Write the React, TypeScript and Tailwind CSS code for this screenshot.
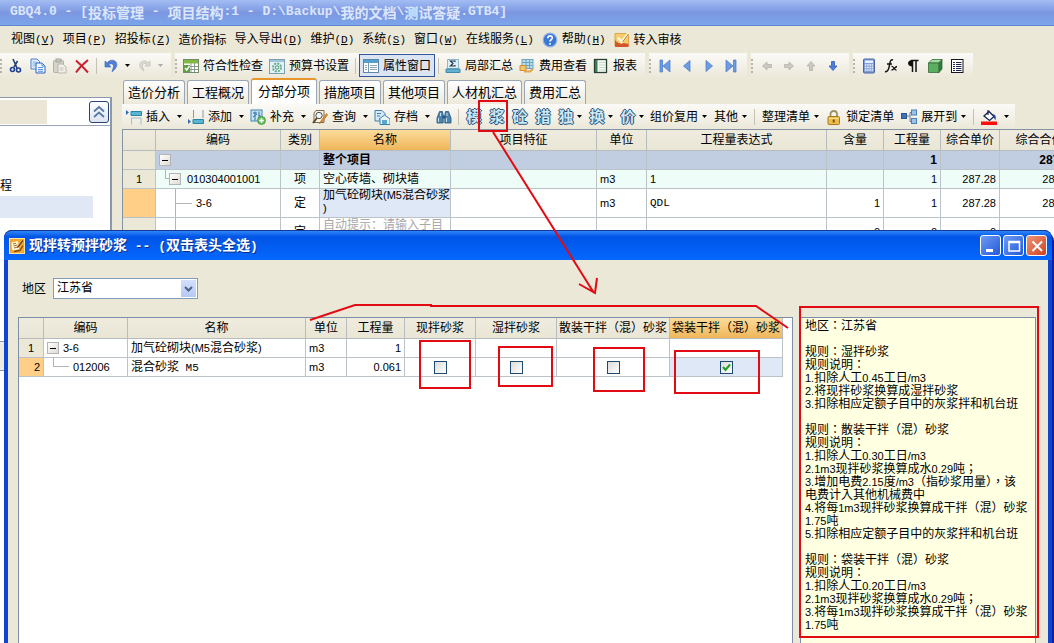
import { useState } from 'react';
import type { ReactNode } from 'react';

/* ---------- icons ---------- */

const Ico = ({ children, size = 'size-4' }: { children: ReactNode; size?: string }) => (
  <svg viewBox="0 0 16 16" className={`${size} shrink-0`} fill="none" aria-hidden="true">
    {children}
  </svg>
);

const CutIcon = () => (
  <Ico>
    <path d="M5 1l4 9M9.500 3L6 9" stroke="#27406e" strokeWidth="1.600" />
    <circle cx="4.500" cy="11.500" r="2" stroke="#1c3f94" strokeWidth="1.600" />
    <circle cx="10.500" cy="12" r="2" stroke="#1c3f94" strokeWidth="1.600" />
  </Ico>
);
const CopyIcon = () => (
  <Ico>
    <path d="M1 1h6l2.500 2.500V11H1z" fill="#e4f0ff" stroke="#4a7fd0" />
    <path d="M2.500 4h4M2.500 6h4M2.500 8h3" stroke="#7fb0ea" />
    <path d="M6 5h6l3 3v7H6z" fill="#f2f8ff" stroke="#2f62bd" />
    <path d="M12 5v3h3M8 9.500h5M8 11.500h5M8 13.300h5" stroke="#5b93dd" />
  </Ico>
);
const PasteIcon = () => (
  <Ico>
    <rect x="1.500" y="2.500" width="10" height="12" rx="1" fill="#d6d3c9" stroke="#b3b0a6" />
    <rect x="4" y="1" width="5" height="3" fill="#c6c3ba" stroke="#aaa79e" />
    <path d="M6 6h5l3 3v6H6z" fill="#f0efea" stroke="#b8b5ab" />
    <path d="M7.500 10h4M7.500 12h4" stroke="#c4c1b8" />
  </Ico>
);
const DeleteIcon = () => (
  <Ico>
    <path d="M2 2.500c4 3.500 8 7.500 12 12M14 2C9 6 5 10 2 14.500" stroke="#cb1f2d" strokeWidth="2" />
  </Ico>
);
const UndoIcon = () => (
  <Ico>
    <path d="M2 3v6h6L5.800 6.700C8.500 4.800 11 5.800 10.300 9.500L9 13.800c5-3.500 6-8 3.500-10.300C10 1.300 6.500 2 4 4.800z" fill="#4f7fd6" stroke="#3465bd" strokeWidth=".6" />
  </Ico>
);
const RedoIcon = () => (
  <Ico>
    <path d="M14 3v5H9l2-2C8.500 4.500 5.500 6 6.500 9l1.500 4C3.500 10.500 2.500 6.500 5 4.200 7.500 2 10.500 3 12.200 4.800z" fill="#dcdad4" stroke="#bebbb2" strokeWidth=".7" />
  </Ico>
);
const CheckTableIcon = () => (
  <Ico>
    <rect x=".5" y="1.500" width="15" height="13" fill="#fff" stroke="#708b6b" />
    <path d="M1 2h14v3.500H1z" fill="#83b93f" />
    <path d="M1 8.500h14M1 11.500h14M8 5v9M11.500 5v9" stroke="#8b9a91" />
    <path d="M1 7h6v7H1z" fill="#5fa03c" />
    <path d="M2 10l1.700 2L6.500 8" stroke="#fff" strokeWidth="1.400" />
  </Ico>
);
const BudgetIcon = () => (
  <Ico>
    <rect x=".5" y="1.500" width="15" height="14" fill="#e4f2f8" stroke="#7ba0b2" />
    <path d="M1 2h14v2H1z" fill="#9cc6d8" />
    <circle cx="8" cy="9.500" r="4" stroke="#62ac86" strokeWidth="2" strokeDasharray="2 1.100" />
    <circle cx="8" cy="9.500" r="1.700" stroke="#459470" />
  </Ico>
);
const PropsIcon = () => (
  <Ico>
    <rect x=".5" y="1.500" width="15" height="13" fill="#fff" stroke="#5f86a8" />
    <path d="M1 2h14v3H1z" fill="#50a3c8" />
    <path d="M5.500 5v9" stroke="#7999ae" />
    <path d="M2 7.500h2M2 9.500h2M2 11.500h2M7 7.500h7M7 9.500h7M7 11.500h7" stroke="#8aa5b5" />
  </Ico>
);
const SumIcon = () => (
  <Ico>
    <path d="M2.500 1.500h11v9h-11z" fill="#dceef7" stroke="#90b6cc" />
    <path d="M10 4V3H5.500L8 5.500 5.500 8H10V7" stroke="#27364a" strokeWidth="1.200" />
    <path d="M1 11h14v3.500H1z" fill="#62b2cf" stroke="#3f89aa" />
  </Ico>
);
const FeeIcon = () => (
  <Ico>
    <rect x="3" y="1.500" width="11" height="9" fill="#b9dcea" stroke="#6ca6c0" />
    <path d="M3 4.500h11M3 7.500h11M7 2v8M10.500 2v8" stroke="#6ca6c0" />
    <path d="M1 7.500h6v5H1z" fill="#f2c36b" stroke="#cf9038" />
    <path d="M5 13.500h6l3-2.500" stroke="#e0a24a" strokeWidth="2" />
  </Ico>
);
const ReportIcon = () => (
  <Ico>
    <rect x="1.500" y="1.500" width="12" height="13" fill="#f6fbf4" stroke="#283f33" strokeWidth="1.300" />
    <path d="M2 2h2.500v12H2z" fill="#3a7b57" />
    <path d="M6 4.500h6M6 7h6M6 9.500h6M6 12h6" stroke="#c5d8c6" />
  </Ico>
);
const NavIcon = ({ kind }: { kind: 'first' | 'prev' | 'next' | 'last' }) => (
  <Ico>
    {kind === 'first' && <path d="M3 2h2.500v12H3zM13 2v12L6 8z" fill="#6d9be4" stroke="#4576cb" strokeWidth=".7" />}
    {kind === 'prev' && <path d="M11 2.500v11L4.500 8z" fill="#6d9be4" stroke="#4576cb" strokeWidth=".7" />}
    {kind === 'next' && <path d="M5 2.500v11L11.500 8z" fill="#6d9be4" stroke="#4576cb" strokeWidth=".7" />}
    {kind === 'last' && <path d="M10.500 2H13v12h-2.500zM3 2v12l7-6z" fill="#6d9be4" stroke="#4576cb" strokeWidth=".7" />}
  </Ico>
);
const arrowTurn = { right: 'rotate(0 8 8)', down: 'rotate(90 8 8)', left: 'rotate(180 8 8)', up: 'rotate(270 8 8)' };
const ArrowIcon = ({ dir, on }: { dir: keyof typeof arrowTurn; on?: boolean }) => (
  <Ico>
    <path
      d="M3.500 6.500h4.500V4l4.500 4L8 12V9.500H3.500z"
      transform={arrowTurn[dir]}
      fill={on ? '#4d7edb' : '#cbc9c2'}
      stroke={on ? '#2f5cb5' : '#b4b2aa'}
      strokeWidth=".8"
    />
  </Ico>
);
const CalcIcon = () => (
  <Ico>
    <rect x="2.500" y="1" width="11" height="14" rx="1" fill="#7f9cd6" stroke="#4c66a5" />
    <path d="M4 2.500h8v2.500H4z" fill="#e7f1ff" />
    <path d="M4 7h8M4 9.500h8M4 12h8" stroke="#eef3ff" strokeWidth="1.500" strokeDasharray="1.500 .7" />
  </Ico>
);
const FxIcon = () => (
  <Ico>
    <path d="M10 2C7.500 1 7 4 6.500 7S5 14.500 2 13.500M4 6h5" stroke="#111" strokeWidth="1.500" />
    <path d="M8.500 8.500c2.500-.5 2.500 4 5 3.500M14 8.500c-2 .2-3.300 3.500-5.500 3.500" stroke="#111" strokeWidth="1.300" />
  </Ico>
);
const ParaIcon = () => (
  <Ico>
    <path d="M7.500 3v11M11 3v11M6 2.600h7.500" stroke="#111" strokeWidth="1.500" />
    <path d="M7.500 2C1.500 2 1.500 8.500 7.500 8.500z" fill="#111" />
  </Ico>
);
const CubeIcon = () => (
  <Ico>
    <path d="M1.500 5L5 1.500h10L12 5z" fill="#a4dca0" stroke="#35693b" strokeWidth=".8" />
    <path d="M1.500 5H12v9.500H1.500z" fill="#5bae60" stroke="#35693b" strokeWidth=".8" />
    <path d="M12 5l3-3.500V11l-3 3.500z" fill="#2f7a3c" stroke="#35693b" strokeWidth=".8" />
  </Ico>
);
const ListIcon = () => (
  <Ico>
    <rect x="2.500" y="1.500" width="11.500" height="13" fill="#fff" stroke="#16161f" />
    <path d="M4 4.500h2M4 6.500h2M4 8.500h2M4 10.500h2M4 12.500h2M7 4.500h5.500M7 6.500h5.500M7 8.500h5.500M7 10.500h5.500M7 12.500h5.500" stroke="#22264f" />
  </Ico>
);
const HelpIcon = () => (
  <Ico>
    <circle cx="8" cy="8" r="6.800" fill="#3b76d2" stroke="#8fb2e6" strokeWidth="1.200" />
    <path d="M5.700 6.200C5.700 3 10.600 3.200 10.300 6 10.100 7.500 8 7.700 8 9.600M8 11v1.700" stroke="#fff" strokeWidth="1.700" />
  </Ico>
);
const AuditIcon = () => (
  <Ico>
    <path d="M1 1.500h13.500v12.500H1z" fill="#f6cd6c" stroke="#e0a548" />
    <path d="M1 8c2 3 5 4 9 3l4.500 1v3H1z" fill="#d5542c" />
    <path d="M4 5.500l3.500 4.500L14.500 1" stroke="#fff6d8" strokeWidth="2.600" />
    <path d="M8.500 10l6-8" stroke="#b67b29" />
  </Ico>
);
const InsertIcon = () => (
  <Ico>
    <path d="M0 1l3 2.500L0 6z" fill="#2c6fb3" />
    <path d="M5 2.500h10.500v4H5z" fill="#56b6d3" stroke="#2b84a8" />
    <path d="M5.500 9v6.500M15 9v6.500M5.500 9H15" stroke="#a4bccb" />
  </Ico>
);
const AddIcon = () => (
  <Ico>
    <path d="M0 10l3 2.500L0 15z" fill="#2c6fb3" />
    <path d="M5 10.500h10.500v4H5z" fill="#56b6d3" stroke="#2b84a8" />
    <path d="M5.500 1v8M15 1v8" stroke="#7e9db3" />
  </Ico>
);
const SupplyIcon = () => (
  <Ico>
    <rect x="1" y="1" width="11" height="11" fill="#c8e4f3" stroke="#3d87b2" />
    <path d="M3 4h4M5 2.500v9M3 8l4-3M9 2.500v8M9 6l2 1.500" stroke="#2c72a4" />
    <circle cx="11.500" cy="11.500" r="4" fill="#6bbd5a" stroke="#3f8c3b" strokeWidth=".7" />
    <path d="M11.500 9.200v4.600M9.200 11.500h4.600" stroke="#fff" strokeWidth="1.500" />
  </Ico>
);
const QueryIcon = () => (
  <Ico>
    <path d="M4 1.500h8v12H2V4z" fill="#fbf4df" stroke="#7a6b55" />
    <circle cx="7" cy="6.500" r="3.200" fill="#eef4fa" stroke="#4b4b4b" />
    <path d="M5 9l-4 5" stroke="#5c4630" strokeWidth="2" />
    <path d="M14.500 4.500L9 12l-1.500 2.500L10 13l5.500-7z" fill="#f09a2e" stroke="#a85f17" strokeWidth=".7" />
  </Ico>
);
const ArchiveIcon = () => (
  <Ico>
    <path d="M1 1.500h7l3 3V12H1z" fill="#d5e9f6" stroke="#3d7fae" />
    <path d="M3 4.500h4M3 7h3" stroke="#3d7fae" />
    <path d="M5 10l5.500-4L16 10v5.500H6V10z" fill="#eaf5fb" stroke="#3a83ab" />
    <path d="M8 11h5v4H8z" fill="#58a9cd" />
  </Ico>
);
const BinocularsIcon = () => (
  <Ico>
    <path d="M3.500 2.500h3l.7 4v7.500H1V9zM12.500 2.500h-3l-.7 4v7.500H15V9z" fill="#4c83ad" stroke="#24587f" strokeWidth=".8" />
    <path d="M6.500 6.500h3v3h-3z" fill="#24587f" />
    <path d="M2.500 9v4M10.500 9v4M4.500 4v3M11 4v3" stroke="#c6e0f0" />
  </Ico>
);
const LockIcon = () => (
  <Ico>
    <path d="M4.500 8V5c0-4 6.500-4 6.500 0v3" stroke="#9d9168" strokeWidth="1.800" />
    <rect x="2" y="7.500" width="11.500" height="8" rx="1" fill="#eebc4c" stroke="#a97a1f" />
    <path d="M3 9.500h9.500" stroke="#fbe29b" />
    <path d="M7.700 10.500v3" stroke="#6e4b0c" strokeWidth="1.800" />
  </Ico>
);
const ExpandIcon = () => (
  <Ico>
    <path d="M6 7h3V3.500h2M9 7v5.500h2" stroke="#6d7f9c" />
    <rect x=".5" y="4.500" width="5" height="5" fill="#3f72b8" stroke="#2c5690" />
    <rect x="10.500" y="1" width="5" height="5" fill="#9dc4e8" stroke="#487fb7" />
    <rect x="10.500" y="9.500" width="5" height="5" fill="#9dc4e8" stroke="#487fb7" />
  </Ico>
);
const FillIcon = () => (
  <Ico>
    <path d="M3 7l5-4.500 5 5-4.500 4z" fill="#fff" stroke="#15254f" strokeWidth="1.300" />
    <path d="M7 1v5" stroke="#15254f" strokeWidth="1.200" />
    <path d="M12 5c3 1 3 3 2.500 6-1.500-1-2-3-2.500-6z" fill="#1d47a5" />
    <path d="M0 12.500h16V16H0z" fill="#f90d0d" />
  </Ico>
);
const AppIcon = () => (
  <Ico>
    <rect x=".5" y=".5" width="15" height="15" fill="#f4a72c" stroke="#ffe5a0" />
    <path d="M2.500 4.500L9 3l1 8-5 1.500-2-1z" fill="#fff7dd" />
    <path d="M4 6l3-.7M4.500 8l4-1M5 10l4-1" stroke="#a05a14" strokeWidth=".9" />
    <path d="M8.500 9.500l5.500-7M5 13.500l6-1 3-5" stroke="#7b4310" strokeWidth="1.300" />
  </Ico>
);

/* ---------- small parts ---------- */

// Latin runs are set in their own face and size beside the Chinese text
const Mixed = ({ text, latin = 'text-[11px]' }: { text: string; latin?: string }) => (
  <>
    {text.split(/([\x20-\x7e]+)/).map((part, i) =>
      i % 2 ? <span key={i} className={`whitespace-pre ${latin}`}>{part}</span> : part
    )}
  </>
);

const MenuLabel = ({ text, hotkey }: { text: string; hotkey?: string }) => (
  <span>
    {text}
    {hotkey && (
      <span className='font-["Liberation_Mono",monospace] text-[11px]'>
        (<u>{hotkey}</u>)
      </span>
    )}
  </span>
);

const Caret = ({ off }: { off?: boolean }) => (
  <svg viewBox="0 0 5 3" className="h-[3px] w-[5px] shrink-0" aria-hidden="true">
    <path d="M0 0h5L2.500 3z" fill={off ? '#aaa' : '#000'} />
  </svg>
);

const Sep = () => <span className="h-4 w-px shrink-0 bg-[#c5c2b5]" />;

const Grip = () => <span className="h-[14px] shrink-0 border-l-2 border-dotted border-[#b8b5a8]" />;

const IconButton = ({ label, children }: { label: string; children: ReactNode }) => (
  <button type="button" aria-label={label} className="flex shrink-0 items-center">
    {children}
  </button>
);

const MenuButton = ({ icon, label, caret = 'none' }: { icon?: ReactNode; label: string; caret?: 'none' | 'near' | 'far' }) => (
  <button type="button" className="flex shrink-0 items-center gap-1 whitespace-nowrap">
    {icon}
    {label}
    {caret === 'near' && <Caret />}
    {caret === 'far' && <span className="flex w-2 justify-end"><Caret /></span>}
  </button>
);

const GlyphButton = ({ glyph, caret }: { glyph: string; caret?: boolean }) => (
  <button type="button" className="flex shrink-0 items-center gap-[3px]">
    <span className="w-4 text-[15px] leading-4 font-bold text-[#cfe7f4] [text-shadow:1px_0_#1f5078,-1px_0_#1f5078,0_1px_#1f5078,0_-1px_#1f5078]">
      {glyph}
    </span>
    {caret && <Caret />}
  </button>
);

const Minus = () => (
  <span className="flex size-3 shrink-0 items-center justify-center border border-[#b4b4b4] bg-linear-to-br from-white to-[#dedbd2]">
    <span className="h-px w-1.5 bg-black" />
  </span>
);

const band = 'flex h-full items-center gap-1.5 bg-linear-to-b from-[#fbfaf7] to-[#ebe8d9] pr-2';

/* ---------- data ---------- */

const menus = [
  { text: '视图', hotkey: 'V' },
  { text: '项目', hotkey: 'P' },
  { text: '招投标', hotkey: 'Z' },
  { text: '造价指标' },
  { text: '导入导出', hotkey: 'D' },
  { text: '维护', hotkey: 'D' },
  { text: '系统', hotkey: 'S' },
  { text: '窗口', hotkey: 'W' },
  { text: '在线服务', hotkey: 'L' },
];

const tabs = ['造价分析', '工程概况', '分部分项', '措施项目', '其他项目', '人材机汇总', '费用汇总'];

const notes = [
  '地区：江苏省',
  '',
  '规则：湿拌砂浆',
  '规则说明：',
  '1.扣除人工0.45工日/m3',
  '2.将现拌砂浆换算成湿拌砂浆',
  '3.扣除相应定额子目中的灰浆拌和机台班',
  '',
  '规则：散装干拌（混）砂浆',
  '规则说明：',
  '1.扣除人工0.30工日/m3',
  '2.1m3现拌砂浆换算成水0.29吨；',
  '3.增加电费2.15度/m3（指砂浆用量），该',
  '电费计入其他机械费中',
  '4.将每1m3现拌砂浆换算成干拌（混）砂浆',
  '1.75吨',
  '5.扣除相应定额子目中的灰浆拌和机台班',
  '',
  '规则：袋装干拌（混）砂浆',
  '规则说明：',
  '1.扣除人工0.20工日/m3',
  '2.1m3现拌砂浆换算成水0.29吨；',
  '3.将每1m3现拌砂浆换算成干拌（混）砂浆',
  '1.75吨',
];

const mortarTypes = ['现拌砂浆', '湿拌砂浆', '散装干拌（混）砂浆', '袋装干拌（混）砂浆'];

const th = 'overflow-hidden border-r border-b border-[#b6bcc0] p-0 text-center font-normal whitespace-nowrap';
const td = 'overflow-hidden border-r border-b border-[#bcc3c8] px-[3px] py-0 whitespace-nowrap';
const num = 'text-right text-[11px]';
const headBg = 'bg-linear-to-b from-[#efecdf] to-[#e9e6d6]';
const hotBg = 'bg-linear-to-b from-[#fbdc9a] to-[#efb658]';
const gridTable = 'table-fixed border-separate border-spacing-0';

/* ---------- main window ---------- */

const TitleBar = () => (
  <header className="flex h-[26px] shrink-0 items-center border-b border-[#6583cf] bg-linear-to-b from-[#a3bdf3] via-[#7c97e1] to-[#7ba5ea] pl-[10px] text-sm font-bold whitespace-nowrap text-[#dce6fb]">
    <Mixed text="GBQ4.0 - [投标管理 - 项目结构:1 - D:\Backup\我的文档\测试答疑.GTB4]" latin='font-["Liberation_Mono",monospace] text-[13px]' />
  </header>
);

const MenuBar = () => (
  <nav className="flex h-[27px] shrink-0 items-center gap-2 pl-[11px] whitespace-nowrap">
    {menus.map((m) => (
      <button type="button" key={m.text}><MenuLabel {...m} /></button>
    ))}
    <button type="button" className="flex items-center gap-1">
      <HelpIcon />
      <MenuLabel text="帮助" hotkey="H" />
    </button>
    <button type="button" className="flex items-center gap-1">
      <AuditIcon />
      转入审核
    </button>
  </nav>
);

const MainToolbar = () => (
  <div className="flex h-[25px] shrink-0 gap-1">
    <div className={band}>
      <Grip />
      <IconButton label="剪切"><CutIcon /></IconButton>
      <IconButton label="复制"><CopyIcon /></IconButton>
      <IconButton label="粘贴"><PasteIcon /></IconButton>
      <IconButton label="删除"><DeleteIcon /></IconButton>
      <Sep />
      <IconButton label="撤销"><UndoIcon /></IconButton>
      <Caret />
      <IconButton label="恢复"><RedoIcon /></IconButton>
      <Caret off />
    </div>
    <div className={band}>
      <Grip />
      <MenuButton icon={<CheckTableIcon />} label="符合性检查" />
      <MenuButton icon={<BudgetIcon />} label="预算书设置" />
      <div className="flex items-center gap-[3px]">
        <Sep />
        <button type="button" className="flex h-[23px] items-center gap-1 border border-[#33539b] bg-[#dbe4f2] px-[3px] whitespace-nowrap">
          <PropsIcon />
          属性窗口
        </button>
        <Sep />
      </div>
      <MenuButton icon={<SumIcon />} label="局部汇总" />
      <MenuButton icon={<FeeIcon />} label="费用查看" />
      <MenuButton icon={<ReportIcon />} label="报表" />
    </div>
    <div className={band}>
      <Grip />
      <IconButton label="首条"><NavIcon kind="first" /></IconButton>
      <IconButton label="上一条"><NavIcon kind="prev" /></IconButton>
      <IconButton label="下一条"><NavIcon kind="next" /></IconButton>
      <IconButton label="末条"><NavIcon kind="last" /></IconButton>
    </div>
    <div className={band}>
      <Grip />
      <IconButton label="左移"><ArrowIcon dir="left" /></IconButton>
      <IconButton label="右移"><ArrowIcon dir="right" /></IconButton>
      <IconButton label="上移"><ArrowIcon dir="up" /></IconButton>
      <IconButton label="下移"><ArrowIcon dir="down" on /></IconButton>
    </div>
    <div className={band}>
      <Grip />
      <IconButton label="计算器"><CalcIcon /></IconButton>
      <IconButton label="函数"><FxIcon /></IconButton>
      <IconButton label="段落"><ParaIcon /></IconButton>
      <IconButton label="图元"><CubeIcon /></IconButton>
      <IconButton label="列表"><ListIcon /></IconButton>
    </div>
  </div>
);

const Sidebar = () => (
  <aside className="mt-[19px] w-[112px] shrink-0 border-t border-r-2 border-[#8b98ac] bg-white">
    <div className="flex h-7 items-center justify-between border-b border-[#9aa4b2] pr-px">
      <span className="h-6 w-[47px] bg-[#ebe6d6]" />
      <button type="button" aria-label="收起" className="flex h-[22px] w-5 items-center justify-center rounded-[3px] border border-[#27446f] bg-linear-to-b from-white to-[#dbe4f0]">
        <Ico>
          <path d="M3 7.500L8 3l5 4.500M3 13l5-4.500 5 4.500" stroke="#5779a6" strokeWidth="1.800" />
        </Ico>
      </button>
    </div>
    <p className="mt-[50px] h-5 leading-5">程</p>
    <div className="h-[22px] w-[93px] bg-[#dfe8f4]" />
    <div className="mt-[123px] h-[30px] border-y border-[#8b98ac] bg-[#eeecE2]" />
  </aside>
);

const EditToolbar = () => (
  <div className="flex h-[25px] shrink-0">
    <div className="flex items-center bg-linear-to-b from-[#fbfaf7] to-[#ebe8d9] pr-1.5 pl-1">
      <div className="flex items-center gap-1.5">
        <MenuButton icon={<InsertIcon />} label="插入" caret="far" />
        <MenuButton icon={<AddIcon />} label="添加" caret="far" />
        <MenuButton icon={<SupplyIcon />} label="补充" caret="far" />
        <MenuButton icon={<QueryIcon />} label="查询" caret="far" />
        <MenuButton icon={<ArchiveIcon />} label="存档" caret="far" />
        <IconButton label="查找"><BinocularsIcon /></IconButton>
      </div>
      <div className="flex items-center gap-[7px] px-1.5">
        <Sep />
        <GlyphButton glyph="模" />
        <GlyphButton glyph="浆" />
        <GlyphButton glyph="砼" />
        <GlyphButton glyph="措" />
        <GlyphButton glyph="独" caret />
        <GlyphButton glyph="换" caret />
        <GlyphButton glyph="价" caret />
      </div>
      <div className="flex items-center gap-[7px]">
        <MenuButton label="组价复用" caret="near" />
        <MenuButton label="其他" caret="near" />
        <Sep />
        <MenuButton label="整理清单" caret="near" />
        <MenuButton icon={<LockIcon />} label="锁定清单" />
        <MenuButton icon={<ExpandIcon />} label="展开到" caret="near" />
        <Sep />
        <IconButton label="填充颜色"><FillIcon /></IconButton>
        <Caret />
      </div>
    </div>
  </div>
);

const BillTable = () => (
  <div className="flex-1 overflow-hidden border-t border-l border-[#8393a3] bg-white">
    <table className={`${gridTable} w-full min-w-[957px]`}>
      <colgroup>
        <col className="w-[33px]" />
        <col className="w-[125px]" />
        <col className="w-[39px]" />
        <col className="w-[131px]" />
        <col className="w-[146px]" />
        <col className="w-[50px]" />
        <col className="w-[180px]" />
        <col className="w-[57px]" />
        <col className="w-[57px]" />
        <col className="w-[59px]" />
        <col />
      </colgroup>
      <thead>
        <tr className="h-[21px]">
          {['', '编码', '类别', '名称', '项目特征', '单位', '工程量表达式', '含量', '工程量', '综合单价', '综合合价'].map((h) => (
            <th key={h} className={`${th} ${h === '名称' ? hotBg : headBg}`}>{h}</th>
          ))}
        </tr>
      </thead>
      <tbody>
        <tr className="h-[19px] bg-[#c1cde0] font-bold">
          <td className={`${td} bg-[#ebe8d8]`} />
          <td className={td}><Minus /></td>
          <td className={td} />
          <td className={td}>整个项目</td>
          <td className={td} />
          <td className={td} />
          <td className={td} />
          <td className={td} />
          <td className={`${td} text-right`}>1</td>
          <td className={td} />
          <td className={`${td} text-right`}>287.28</td>
        </tr>
        <tr className="h-[19px] bg-[#effdf9]">
          <td className={`${td} bg-[#ebe8d8] text-center text-[11px]`}>1</td>
          <td className={td}>
            <div className="flex h-[18px] items-center pl-1.5">
              <span className="h-[9px] w-1 self-start border-b border-l border-[#b4b4b4]" />
              <Minus />
              <span className="pl-1.5 text-[11px]">010304001001</span>
            </div>
          </td>
          <td className={`${td} text-center`}>项</td>
          <td className={td}>空心砖墙、砌块墙</td>
          <td className={td} />
          <td className={`${td} text-[11px]`}>m3</td>
          <td className={`${td} text-[11px]`}>1</td>
          <td className={td} />
          <td className={`${td} ${num}`}>1</td>
          <td className={`${td} ${num}`}>287.28</td>
          <td className={`${td} ${num}`}>287.28</td>
        </tr>
        <tr className="h-[29px]">
          <td className={`${td} bg-[#ffcf87]`} />
          <td className={td}>
            <div className="flex h-7 items-center pl-4">
              <span className="h-full border-l border-[#b4b4b4]" />
              <span className="w-4 border-t border-[#b4b4b4]" />
              <span className="pl-1 text-[11px]">3-6</span>
            </div>
          </td>
          <td className={`${td} text-center`}>定</td>
          <td className={`${td} bg-[#dfe8f6]`}>
            <div className="h-7 leading-[13px]">
              <Mixed text="加气砼砌块(M5混合砂浆" />
              <br />
              <Mixed text=")" />
            </div>
          </td>
          <td className={td} />
          <td className={`${td} text-[11px]`}>m3</td>
          <td className={`${td} font-["Liberation_Mono",monospace] text-[11px]`}>QDL</td>
          <td className={`${td} ${num}`}>1</td>
          <td className={`${td} ${num}`}>1</td>
          <td className={`${td} ${num}`}>287.28</td>
          <td className={`${td} ${num}`}>287.28</td>
        </tr>
        <tr className="h-[29px]">
          <td className={`${td} bg-[#ebe8d8]`} />
          <td className={td}>
            <div className="flex h-7 pl-4">
              <span className="border-l border-[#b4b4b4]" />
            </div>
          </td>
          <td className={`${td} text-center`}>定</td>
          <td className={`${td} text-[#a9a9a9]`}>
            <div className="h-7 leading-[14px]">自动提示：请输入子目</div>
          </td>
          <td className={td} />
          <td className={td} />
          <td className={td} />
          <td className={`${td} ${num}`}>0</td>
          <td className={`${td} ${num}`}>0</td>
          <td className={`${td} ${num}`}>0</td>
          <td className={`${td} ${num}`}>0</td>
        </tr>
      </tbody>
    </table>
  </div>
);

/* ---------- mortar dialog ---------- */

const MortarDialog = () => {
  const [region, setRegion] = useState('江苏省');
  const [checked, setChecked] = useState([false, false, false, true]);

  const toggle = (index: number) => setChecked((prev) => prev.map((c, i) => (i === index ? !c : c)));

  return (
    <section
      role="dialog"
      aria-label="现拌转预拌砂浆"
      className="absolute top-[230px] right-[2px] bottom-0 left-1 flex flex-col rounded-t-lg border-x-4 border-[#0f45d0] bg-[#0f45d0] shadow-[2px_3px_0_#0b1fa6]"
    >
      <div className="-mx-1 flex h-[30px] shrink-0 items-center gap-1 rounded-t-lg border-t border-[#123a9a] bg-linear-to-b from-[#2f86fa] via-[#0054e6] via-20% to-[#0568ff] pr-[5px] pl-[5px] text-sm font-bold text-white">
        <AppIcon />
        <h2 className="flex-1 whitespace-nowrap [text-shadow:1px_1px_#0a2f8a]">
          <Mixed text="现拌转预拌砂浆 -- (双击表头全选)" latin='font-["Liberation_Mono",monospace] text-[13px]' />
        </h2>
        <div className="flex gap-0.5">
          <button type="button" aria-label="最小化" className="size-[21px] rounded-[3px] border border-white bg-linear-to-br from-[#6f9bf3] to-[#2457d8] p-0.5">
            <Ico><path d="M3 11h7v3H3z" fill="#fff" /></Ico>
          </button>
          <button type="button" aria-label="最大化" className="size-[21px] rounded-[3px] border border-white bg-linear-to-br from-[#6f9bf3] to-[#2457d8] p-0.5">
            <Ico><path d="M3 3.500h10.500V13H3zM3 4.500h10.500" stroke="#fff" strokeWidth="1.500" /></Ico>
          </button>
          <button type="button" aria-label="关闭" className="size-[21px] rounded-[3px] border border-white bg-linear-to-br from-[#ee9478] to-[#cf3d17] p-0.5">
            <Ico><path d="M3.500 3.500l9.500 9.500M13 3.500L3.500 13" stroke="#fff" strokeWidth="2" /></Ico>
          </button>
        </div>
      </div>

      <div className="flex min-h-0 flex-1 flex-col bg-[#ebe8d8] pr-3 pl-[10px]">
        <div className="flex h-[57px] shrink-0 items-center gap-[7px] pl-1">
          <label htmlFor="region">地区</label>
          <div className="relative">
            <select
              id="region"
              value={region}
              onChange={(e) => setRegion(e.target.value)}
              className="h-[21px] w-[145px] appearance-none border border-[#7f9db9] bg-white px-[3px] leading-[19px] outline-none"
            >
              <option>江苏省</option>
            </select>
            <span className="pointer-events-none absolute top-0.5 right-0.5 flex h-[17px] w-[15px] items-center justify-center bg-linear-to-b from-[#d3dffd] to-[#b5c9f6]">
              <svg viewBox="0 0 9 6" className="h-1.5 w-[9px]" fill="none">
                <path d="M1 1l3.500 3.500L8 1" stroke="#4d6185" strokeWidth="2" />
              </svg>
            </span>
          </div>
        </div>

        <div className="flex min-h-0 flex-1 gap-[7px]">
          <div className="min-w-0 flex-1 overflow-hidden border-x border-t border-[#7b90a8] bg-white">
            <table className={`${gridTable} w-[764px]`}>
              <colgroup>
                <col className="w-[25px]" />
                <col className="w-[84px]" />
                <col className="w-[178px]" />
                <col className="w-[41px]" />
                <col className="w-[58px]" />
                <col className="w-[71px]" />
                <col className="w-[81px]" />
                <col className="w-[113px]" />
                <col className="w-[113px]" />
              </colgroup>
              <thead>
                <tr className="h-[21px]">
                  {['', '编码', '名称', '单位', '工程量', ...mortarTypes].map((h) => (
                    <th key={h} className={`${th} ${h === mortarTypes[3] ? hotBg : headBg}`}>{h}</th>
                  ))}
                </tr>
              </thead>
              <tbody>
                <tr className="h-[19px]">
                  <td className={`${td} bg-[#ebe8d8] text-center text-[11px]`}>1</td>
                  <td className={td}>
                    <div className="flex h-[18px] items-center">
                      <Minus />
                      <span className="pl-1 text-[11px]">3-6</span>
                    </div>
                  </td>
                  <td className={td}><Mixed text="加气砼砌块(M5混合砂浆)" /></td>
                  <td className={`${td} text-[11px]`}>m3</td>
                  <td className={`${td} ${num}`}>1</td>
                  {mortarTypes.map((m) => <td key={m} className={td} />)}
                </tr>
                <tr className="h-[19px]">
                  <td className={`${td} ${num} bg-[#ffcf87]`}>2</td>
                  <td className={td}>
                    <div className="flex h-[18px] items-center pl-1.5">
                      <span className="h-[9px] w-4 self-start border-b border-l border-[#b4b4b4]" />
                      <span className="pl-1 text-[11px]">012006</span>
                    </div>
                  </td>
                  <td className={td}><Mixed text="混合砂浆 M5" latin='font-["Liberation_Mono",monospace] text-[11px]' /></td>
                  <td className={`${td} text-[11px]`}>m3</td>
                  <td className={`${td} ${num}`}>0.061</td>
                  {mortarTypes.map((m, i) => (
                    <td key={m} className={`${td} ${i === 3 ? 'bg-[#dfe8f6]' : ''}`}>
                      <label className="mx-auto grid size-[13px]">
                        <input
                          type="checkbox"
                          aria-label={m}
                          checked={checked[i]}
                          onChange={() => toggle(i)}
                          className="col-start-1 row-start-1 size-[13px] appearance-none border border-[#1d4a70] bg-linear-to-br from-[#dcdcd7] to-white"
                        />
                        {checked[i] && (
                          <svg viewBox="0 0 13 13" className="pointer-events-none col-start-1 row-start-1 size-[13px]" fill="none">
                            <path d="M3 6l2.500 3L10 3.500" stroke="#21a121" strokeWidth="2" />
                          </svg>
                        )}
                      </label>
                    </td>
                  ))}
                </tr>
              </tbody>
            </table>
          </div>

          <div className="w-[236px] shrink-0 overflow-hidden border-x border-t border-[#7b90a8] bg-[#ffffe1] px-1 pt-0.5">
            {notes.map((line, i) => (
              <p key={i} className="h-[13px] font-['Liberation_Sans','Noto_Sans_CJK_TC',sans-serif] leading-[13px] whitespace-nowrap">
                <Mixed text={line} />
              </p>
            ))}
          </div>
        </div>
      </div>
    </section>
  );
};

// Red pen marks drawn over both windows
const Markup = () => (
  <svg className="pointer-events-none absolute inset-0 size-full" fill="none" stroke="#e30b13" strokeWidth="2" aria-hidden="true">
    <rect x="479" y="101" width="28" height="30" />
    <path d="M493 132L594 293M579 284l16 9 2-15" />
    <path d="M310 320l45-15h76v1h325l32 22" />
    <rect x="420" y="341" width="50" height="47" />
    <rect x="499" y="347" width="53" height="39" />
    <rect x="594" y="348" width="50" height="43" />
    <rect x="675" y="351" width="84" height="42" />
    <rect x="800" y="307" width="238" height="330" />
  </svg>
);

const App = () => {
  const [tab, setTab] = useState('分部分项');

  return (
    <div className="relative flex h-screen flex-col overflow-hidden bg-[#ebe8d8] font-['Liberation_Sans','Noto_Sans_CJK_SC',sans-serif] text-xs text-black">
      <TitleBar />
      <MenuBar />
      <MainToolbar />
      <div className="flex min-h-0 flex-1 gap-[10px]">
        <Sidebar />
        <main className="flex min-w-0 flex-1 flex-col">
          <div role="tablist" className="flex h-[26px] shrink-0 items-end gap-0.5 pl-px text-[13px]">
            {tabs.map((t) => (
              <button
                type="button"
                role="tab"
                aria-selected={t === tab}
                key={t}
                onClick={() => setTab(t)}
                className={`rounded-t-[3px] border-x whitespace-nowrap ${
                  t === tab
                    ? 'h-[26px] border-t-2 border-x-[#9aa6b5] border-t-[#e8962e] bg-white px-1.5'
                    : 'h-6 border-t border-[#9aa6b5] bg-linear-to-b from-white to-[#ece9dc] px-1'
                }`}
              >
                {t}
              </button>
            ))}
          </div>
          <EditToolbar />
          <BillTable />
        </main>
      </div>
      <MortarDialog />
      <Markup />
    </div>
  );
};

export default App;
